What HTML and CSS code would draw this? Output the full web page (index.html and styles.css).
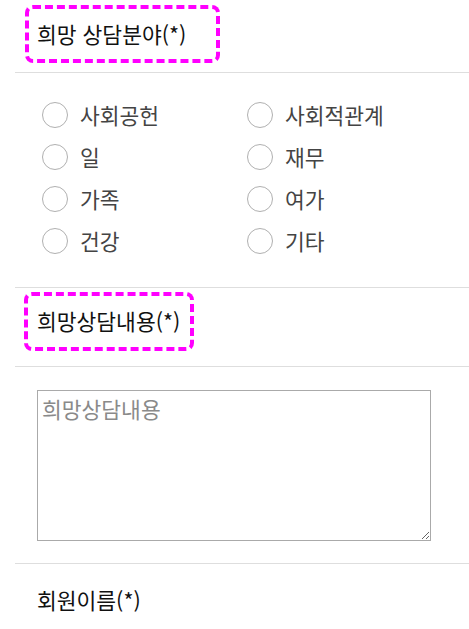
FILE: index.html
```html
<!DOCTYPE html>
<html lang="ko">
<head>
    <meta charset="UTF-8">
    <meta name="viewport" content="width=device-width, initial-scale=1.0">
    <title>상담 신청</title>
    <link rel="stylesheet" href="styles.css">
</head>
<body>
    <form class="consult-form">
        <div class="field-head first">
            <span class="field-title marked">희망 상담분야(*)</span>
        </div>
        <div class="field-body radios">
            <label class="radio"><input type="radio" name="area" value="1"><span class="dot"></span>사회공헌</label>
            <label class="radio"><input type="radio" name="area" value="2"><span class="dot"></span>사회적관계</label>
            <label class="radio"><input type="radio" name="area" value="3"><span class="dot"></span>일</label>
            <label class="radio"><input type="radio" name="area" value="4"><span class="dot"></span>재무</label>
            <label class="radio"><input type="radio" name="area" value="5"><span class="dot"></span>가족</label>
            <label class="radio"><input type="radio" name="area" value="6"><span class="dot"></span>여가</label>
            <label class="radio"><input type="radio" name="area" value="7"><span class="dot"></span>건강</label>
            <label class="radio"><input type="radio" name="area" value="8"><span class="dot"></span>기타</label>
        </div>
        <div class="field-head second">
            <span class="field-title marked">희망상담내용(*)</span>
        </div>
        <div class="field-body memo">
            <textarea name="content" placeholder="희망상담내용"></textarea>
        </div>
        <div class="field-head third">
            <span class="field-title">회원이름(*)</span>
        </div>
    </form>
</body>
</html>
```

FILE: styles.css
```css
body {
    margin: 0;
    font-family: "Noto Sans CJK KR", "Liberation Sans", sans-serif;
    background: #fff;
}
.consult-form {
    margin-left: 15px;
}
.field-head {
    border-top: 1px solid #dedede;
}
.field-head.first {
    border-top: none;
    padding: 5px 0 9px;
}
.field-head.second {
    padding: 4px 0 15px;
}
.field-head.third {
    padding: 22px 0 0 22px;
}
.field-title {
    font-size: 21.5px;
    color: #111;
    line-height: 28px;
}
.field-title.marked {
    display: inline-block;
    margin-left: 10px;
    padding: 11px 8px 11px 8px;
    border: 4px dashed #ff00ff;
    border-radius: 8px;
}
.field-head.first .field-title.marked {
    padding-right: 30px;
}
.field-head.second .field-title.marked {
    margin-left: 9px;
    padding: 11px 10px 12px 9px;
}
.field-body {
    border-top: 1px solid #dedede;
}
.radios {
    display: grid;
    grid-template-columns: 205px 205px;
    row-gap: 17px;
    padding: 29px 0 34px 27px;
}
.radio {
    display: flex;
    align-items: center;
    height: 25px;
    font-size: 21.5px;
    color: #444;
    line-height: 25px;
}
.radio input {
    display: none;
}
.radio .dot {
    width: 24px;
    height: 24px;
    border: 1px solid #b0b0b0;
    border-radius: 50%;
    margin-right: 12px;
}
.memo {
    padding: 23px 0 22px 22px;
}
.memo textarea {
    display: block;
    box-sizing: border-box;
    width: 394px;
    height: 151px;
    padding: 4px;
    border: 1px solid #aaa;
    font-family: inherit;
    font-size: 21.5px;
    line-height: 28px;
    color: #333;
}
.memo textarea::placeholder {
    color: #8a8a8a;
}
```
